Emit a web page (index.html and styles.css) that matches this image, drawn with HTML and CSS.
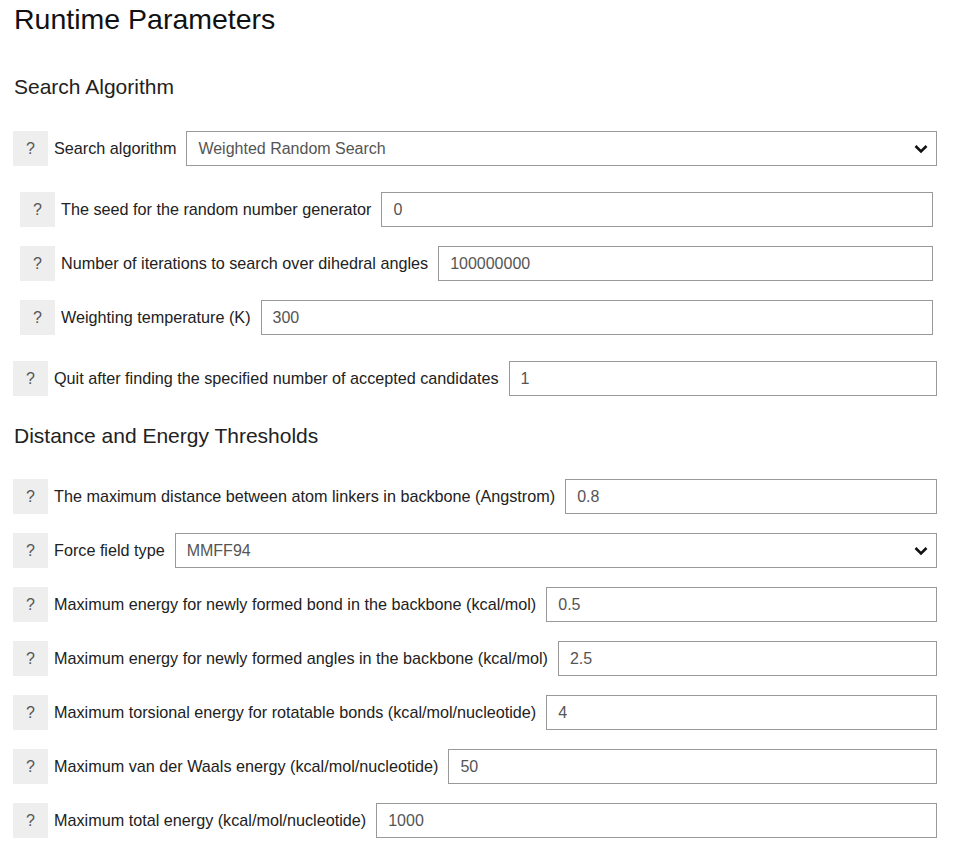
FILE: index.html
```html
<!DOCTYPE html>
<html>
<head>
<meta charset="utf-8">
<link rel="stylesheet" href="styles.css">
</head>
<body>
<div class="page">
  <h1 class="title">Runtime Parameters</h1>
  <h2 class="section">Search Algorithm</h2>

  <div class="row">
    <span class="help">?</span>
    <label class="label">Search algorithm</label>
    <div class="field select"><span>Weighted Random Search</span>
      <svg class="chev" width="14" height="10" viewBox="0 0 14 10"><path d="M1.5 2 L7 7.5 L12.5 2" fill="none" stroke="#111" stroke-width="2.6"/></svg>
    </div>
  </div>

  <div class="group">
    <div class="row">
      <span class="help">?</span>
      <label class="label">The seed for the random number generator</label>
      <div class="field">0</div>
    </div>
    <div class="row">
      <span class="help">?</span>
      <label class="label">Number of iterations to search over dihedral angles</label>
      <div class="field">100000000</div>
    </div>
    <div class="row">
      <span class="help">?</span>
      <label class="label">Weighting temperature (K)</label>
      <div class="field">300</div>
    </div>
  </div>

  <div class="row">
    <span class="help">?</span>
    <label class="label">Quit after finding the specified number of accepted candidates</label>
    <div class="field">1</div>
  </div>

  <h2 class="section section2">Distance and Energy Thresholds</h2>

  <div class="row">
    <span class="help">?</span>
    <label class="label">The maximum distance between atom linkers in backbone (Angstrom)</label>
    <div class="field">0.8</div>
  </div>
  <div class="row">
    <span class="help">?</span>
    <label class="label">Force field type</label>
    <div class="field select"><span>MMFF94</span>
      <svg class="chev" width="14" height="10" viewBox="0 0 14 10"><path d="M1.5 2 L7 7.5 L12.5 2" fill="none" stroke="#111" stroke-width="2.6"/></svg>
    </div>
  </div>
  <div class="row">
    <span class="help">?</span>
    <label class="label">Maximum energy for newly formed bond in the backbone (kcal/mol)</label>
    <div class="field">0.5</div>
  </div>
  <div class="row">
    <span class="help">?</span>
    <label class="label">Maximum energy for newly formed angles in the backbone (kcal/mol)</label>
    <div class="field">2.5</div>
  </div>
  <div class="row">
    <span class="help">?</span>
    <label class="label">Maximum torsional energy for rotatable bonds (kcal/mol/nucleotide)</label>
    <div class="field">4</div>
  </div>
  <div class="row">
    <span class="help">?</span>
    <label class="label">Maximum van der Waals energy (kcal/mol/nucleotide)</label>
    <div class="field">50</div>
  </div>
  <div class="row">
    <span class="help">?</span>
    <label class="label">Maximum total energy (kcal/mol/nucleotide)</label>
    <div class="field">1000</div>
  </div>
</div>
</body>
</html>
```

FILE: styles.css
```css
* { box-sizing: border-box; }
html, body { margin: 0; padding: 0; background: #fff; }
body {
  font-family: "Liberation Sans", Arial, sans-serif;
  color: #222;
}
.page {
  padding: 0 23px 0 13px;
  display: flex;
  flex-direction: column;
}
.title {
  font-size: 28.5px;
  font-weight: normal;
  line-height: 30px;
  margin: 4px 0 0 1px;
  color: #111;
}
.section {
  font-size: 21px;
  font-weight: normal;
  line-height: 24px;
  margin: 41px 0 32px 1px;
  color: #222;
}
.section2 { margin-top: 9px; margin-bottom: 31px; }
.row {
  display: flex;
  align-items: center;
  height: 35px;
  margin-bottom: 19px;
}
.group {
  display: flex;
  flex-direction: column;
  padding: 7px 4px 0 7px;
  margin-bottom: 7px;
}
.help {
  flex: 0 0 35px;
  height: 35px;
  background: #eeeeee;
  color: #555;
  font-size: 16px;
  display: flex;
  align-items: center;
  justify-content: center;
}
.label {
  font-size: 16.2px;
  margin: 0 10px 0 6px;
  white-space: nowrap;
  color: #222;
}
.field {
  flex: 1;
  height: 35px;
  border: 1px solid #999;
  display: flex;
  align-items: center;
  padding: 0 11px;
  font-size: 16px;
  color: #555;
}
.select { padding-right: 8px; justify-content: space-between; }
.chev { display: block; }
```
